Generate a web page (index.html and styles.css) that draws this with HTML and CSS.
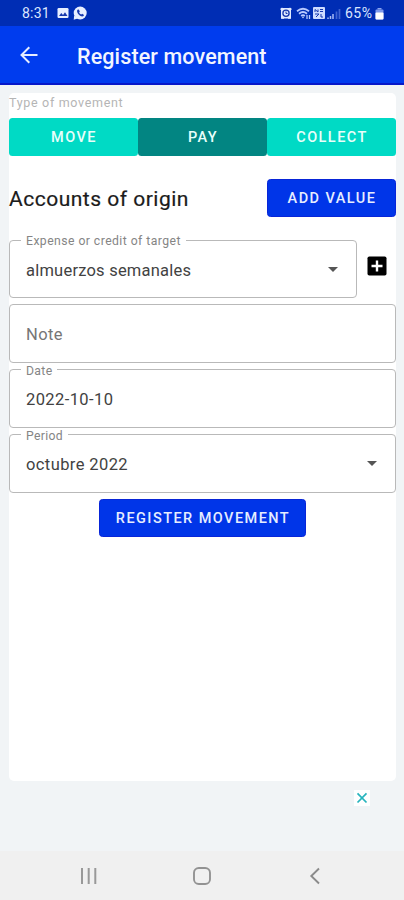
FILE: index.html
```html
<!DOCTYPE html>
<html lang="en">
<head>
<meta charset="utf-8">
<title>Register movement</title>
<link rel="stylesheet" href="styles.css">
</head>
<body>
<div class="status">
  <span class="clock">8:31</span>
  <svg class="notices" width="32" height="16" viewBox="0 0 32 16">
    <rect x="1.500" y="3" width="11" height="10" rx="1.2" fill="#e8efff"/>
    <path d="M3 11l2.300-3 1.700 2 2-2.700 2.500 3.700z" fill="#1738ad"/>
    <circle cx="24.200" cy="8" r="6.500" fill="#e8efff"/>
    <path d="M18.200 10.500L17.700 14.700l4-1.200z" fill="#e8efff"/>
    <path d="M21.400 4.800c-1 1.500.2 3.700 1.600 5 1.500 1.400 3.200 2.200 4.500 1.200l.5-1-1.800-1.200-1 .8c-1-.5-1.700-1.200-2.100-2.100l.7-.9-1-2z" fill="#1738ad"/>
  </svg>
  <svg class="signals" width="64" height="16" viewBox="0 0 64 16">
    <rect x="2" y="3" width="10" height="10.500" rx="1" fill="#e1eaff"/>
    <path d="M1.500 4.500l2-1.500M12.500 4.500l-2-1.500M2 13h3M9 13h3" stroke="#e1eaff" stroke-width="1.500"/>
    <circle cx="7" cy="8.300" r="3.100" fill="none" stroke="#1738ad" stroke-width="1.300"/>
    <path d="M7 6.500v2h1.500" fill="none" stroke="#1738ad"/>
    <g fill="none" stroke="#b9caff" stroke-width="1.800">
      <path d="M18 6.300q6-5 12 0M20 8.700q4-3.300 8 0M22.200 11q1.800-1.500 3.600 0"/>
      <path d="M28 10v4M30.500 10v4" stroke-width="1.300"/>
    </g>
    <path d="M23 12h2l-1 1.500z" fill="#dbe5ff"/>
    <rect x="34" y="2" width="12" height="12" rx="1" fill="#cfdcff"/>
    <path d="M36 7V4.500l3 2.500V4.500M41 4.500h3M41 6.500h3M36 9h4l-3 3M42 9v3h2" fill="none" stroke="#1738ad" stroke-width="1"/>
    <path d="M49 14v-1.500M51.500 14v-3M54 14V9" stroke="#a9bcf5" stroke-width="1.500"/>
    <path d="M57.500 14V6.500M60.500 14V4" stroke="#4265d2" stroke-width="1.700"/>
  </svg>
  <span class="percent">65%</span>
  <svg class="battery" width="9" height="12" viewBox="0 0 9 12">
    <path d="M2.500 0h4v1.500h-4z" fill="#8ca5f0"/>
    <rect x=".5" y="1.500" width="8" height="10" rx="1" fill="#7f9aeb"/>
    <rect x=".5" y="4.500" width="8" height="7" rx="1" fill="#fff"/>
  </svg>
</div>
<header class="appbar">
  <svg class="back" width="20" height="20" viewBox="0 0 20 20"><path d="M18.500 10H3M10.300 2.200L2.500 10l7.800 7.800" fill="none" stroke="#e6edff" stroke-width="2"/></svg>
  <h1>Register movement</h1>
</header>
<main class="page">
  <section class="card">
    <div class="caption">Type of movement</div>
    <div class="types">
      <button class="btn teal">MOVE</button>
      <button class="btn teal selected">PAY</button>
      <button class="btn teal">COLLECT</button>
    </div>
    <div class="origin">
      <h2>Accounts of origin</h2>
      <button class="btn blue add">ADD VALUE</button>
    </div>
    <div class="target">
      <fieldset class="field">
        <legend class="long">Expense or credit of target</legend>
        <div class="value"><span class="words">almuerzos semanales</span><i class="arrow"></i></div>
      </fieldset>
      <svg class="plus" width="20" height="20" viewBox="0 0 20 20"><rect x=".5" y=".5" width="19" height="19" rx="1.800" fill="#000"/><path d="M10 4.500v11M4.500 10h11" stroke="#fff" stroke-width="2.400"/></svg>
    </div>
    <div class="field note"><div class="value"><span>Note</span></div></div>
    <fieldset class="field">
      <legend>Date</legend>
      <div class="value"><span>2022-10-10</span></div>
    </fieldset>
    <fieldset class="field">
      <legend>Period</legend>
      <div class="value"><span>octubre 2022</span><i class="arrow"></i></div>
    </fieldset>
    <button class="btn blue register">REGISTER MOVEMENT</button>
  </section>
</main>
<div class="ad"><span class="close"><svg width="16" height="16" viewBox="0 0 16 16"><path d="M3.500 3.300l9 9.200M12.500 3.300l-9 9.200" stroke="#27b4bd" stroke-width="1.700"/></svg></span></div>
<nav class="nav">
  <svg width="18" height="18" viewBox="0 0 18 18"><path d="M2 1v16M8.700 1v16M15.300 1v16" stroke="#999" stroke-width="2"/></svg>
  <svg width="18" height="18" viewBox="0 0 18 18"><rect x="1" y="1" width="16" height="16" rx="4.800" fill="none" stroke="#929292" stroke-width="1.900"/></svg>
  <svg width="18" height="18" viewBox="0 0 18 18"><path d="M13 1.500L5.300 9l7.700 7.500" fill="none" stroke="#8b8b8b" stroke-width="1.900"/></svg>
</nav>
</body>
</html>
```
FILE: styles.css
```css
* { box-sizing: border-box; }
body {
  margin: 0;
  height: 900px;
  display: flex;
  flex-direction: column;
  font-family: Roboto, sans-serif;
  background: #f1f4f6;
  overflow: hidden;
}
h1, h2 { margin: 0; font-weight: 500; white-space: nowrap; }
svg { display: block; flex: none; }
.status {
  height: 26px;
  padding: 0 20px 0 22px;
  display: flex;
  align-items: center;
  background: #002db4;
  color: #dce6ff;
  font-size: 14px;
}
.clock { width: 34px; letter-spacing: .2px; }
.signals { margin-left: auto; }
.percent { width: 30px; margin-left: 2px; letter-spacing: .45px; }
.battery { margin-top: 2px; }
.appbar {
  height: 59px;
  padding-left: 19px;
  display: flex;
  align-items: center;
  background: #003cee;
  border-bottom: 2px solid #0718c9;
}
.back { margin-right: 38px; }
h1 { color: #f2f5ff; font-size: 21.500px; letter-spacing: .12px; line-height: 26px; padding-top: 4px; }
.page { height: 696px; padding: 8px 8px 0 9px; }
.card { height: 688px; background: #fff; border-radius: 5px; }
.caption { height: 24.500px; padding-top: 2px; font-size: 12.500px; line-height: 16px; letter-spacing: .68px; color: #b5b5b5; }
.types { display: grid; grid-template-columns: 1fr 1fr 1fr; height: 38.500px; }
.btn {
  border: 0;
  padding: 2px 0 0 1px;
  border-radius: 3.500px;
  color: #e8fffb;
  font: 500 14.500px/36px Roboto, sans-serif;
  letter-spacing: 1.45px;
  text-align: center;
  white-space: nowrap;
}
.teal { background: #00dac5; }
.selected { background: #028582; }
.blue { height: 38px; background: #0035e8; color: #e6edff; border: 1px solid #0825d8; line-height: 34px; }
.origin { display: flex; justify-content: space-between; align-items: center; height: 38px; margin-top: 23px; }
h2 { color: #1b1b1b; font-size: 21px; font-weight: 400; letter-spacing: .5px; padding-top: 2px; -webkit-text-stroke: .2px #1b1b1b; }
.add { width: 129px; }
.target { display: grid; grid-template-columns: 348px 20px; column-gap: 10px; margin-top: 16px; }
.plus { margin-top: 23px; }
.field {
  height: 65px;
  margin: 0;
  padding: 0 16px;
  min-width: 0;
  border: 1.500px solid #b9b9b9;
  border-radius: 4px;
}
legend { height: 14px; margin-left: -5px; padding: 1px 5px 0; font-size: 12.200px; line-height: 14px; letter-spacing: .35px; color: #858585; white-space: nowrap; }
.long { letter-spacing: .45px; }
.value { display: flex; align-items: center; justify-content: space-between; height: 46px; font-size: 16.500px; letter-spacing: .4px; color: #424242; white-space: nowrap; }
.words { letter-spacing: .22px; }
.note { height: 58.500px; margin-top: 6px; }
.note .value { height: 58px; color: #767676; }
.arrow { border: 5px solid transparent; border-top-color: #555; border-bottom: 0; margin: 0 2.500px 2px 0; }
.register { display: block; width: 207px; margin: 6px auto 0; }
.ad { height: 70px; padding: 9px 34px 0 0; display: flex; justify-content: flex-end; }
.close { width: 16px; height: 16px; background: #fff; }
.nav { flex: 1; display: grid; grid-template-columns: repeat(3, 113px); justify-content: center; justify-items: center; align-items: center; background: #f0f0f0; }
```
